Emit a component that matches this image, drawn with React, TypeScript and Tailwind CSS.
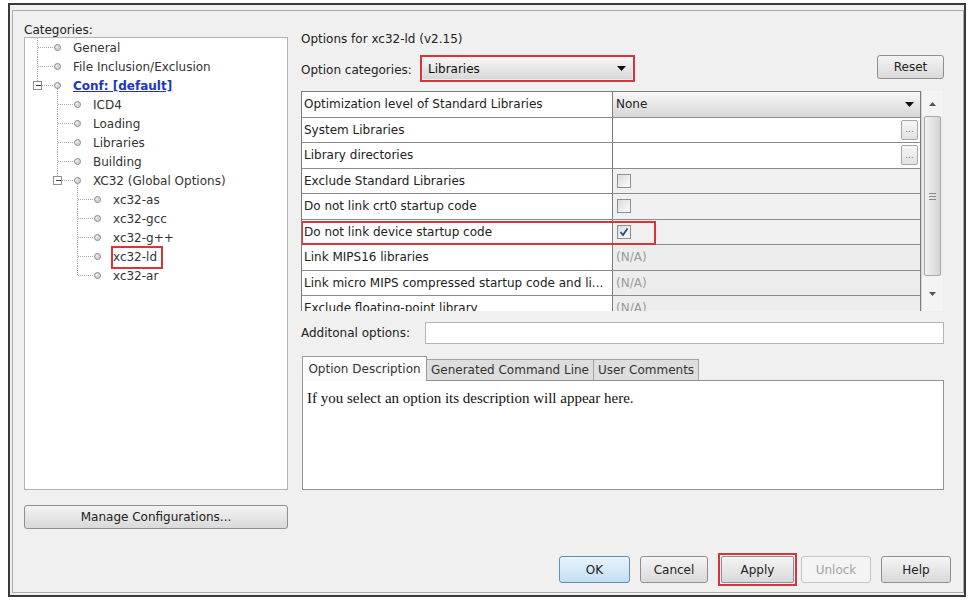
import React from "react";

type TreeItem = { t: string; L: number; last?: boolean; exp?: boolean; link?: boolean; boxed?: boolean };

const tree: TreeItem[] = [
  { t: "General", L: 0 },
  { t: "File Inclusion/Exclusion", L: 0 },
  { t: "Conf: [default]", L: 0, last: true, exp: true, link: true },
  { t: "ICD4", L: 1 },
  { t: "Loading", L: 1 },
  { t: "Libraries", L: 1 },
  { t: "Building", L: 1 },
  { t: "XC32 (Global Options)", L: 1, last: true, exp: true },
  { t: "xc32-as", L: 2 },
  { t: "xc32-gcc", L: 2 },
  { t: "xc32-g++", L: 2 },
  { t: "xc32-ld", L: 2, boxed: true },
  { t: "xc32-ar", L: 2, last: true },
];

function TreeRow({ item }: { item: TreeItem }) {
  const L = item.L;
  const lineX = 12 + 20 * L + 0.5;
  const iconX = 32 + 20 * L + 0.5;
  const w = 48 + 20 * L;
  return (
    <div className="flex h-[19px] items-center">
      <svg width={w} height={19} className="shrink-0" shapeRendering="crispEdges">
        <line x1={lineX} y1={0} x2={lineX} y2={item.last ? 9.5 : 19} stroke="#a6a6a6" strokeDasharray="1 1" />
        <line x1={lineX} y1={9.5} x2={iconX - 5} y2={9.5} stroke="#a6a6a6" strokeDasharray="1 1" />
        {item.exp && (
          <>
            <line x1={iconX} y1={13} x2={iconX} y2={19} stroke="#a6a6a6" strokeDasharray="1 1" />
            <rect x={lineX - 4} y={5.5} width={8} height={8} fill="#fff" stroke="#909090" />
            <line x1={lineX - 2} y1={9.5} x2={lineX + 3} y2={9.5} stroke="#404040" />
          </>
        )}
        <g shapeRendering="auto">
          <circle cx={iconX} cy={9.5} r={3} fill="#d6d6d6" stroke="#8c8c8c" strokeWidth={1} />
          <circle cx={iconX - 0.8} cy={8.7} r={1} fill="#f4f4f4" />
        </g>
      </svg>
      {item.link ? (
        <span className="font-bold text-[#2035c0] underline whitespace-nowrap">{item.t}</span>
      ) : item.boxed ? (
        <span className="relative whitespace-nowrap text-[#333]">
          {item.t}
          <span className="absolute -left-[2px] -right-[6px] -top-[2px] -bottom-[3px] border-2 border-[#d8353b]" />
        </span>
      ) : (
        <span className="whitespace-nowrap text-[#333]">{item.t}</span>
      )}
    </div>
  );
}

type Row = { label: string; kind: "select" | "text" | "check" | "na"; checked?: boolean; highlight?: boolean };

const rows: Row[] = [
  { label: "Optimization level of Standard Libraries", kind: "select" },
  { label: "System Libraries", kind: "text" },
  { label: "Library directories", kind: "text" },
  { label: "Exclude Standard Libraries", kind: "check" },
  { label: "Do not link crt0 startup code", kind: "check" },
  { label: "Do not link device startup code", kind: "check", checked: true, highlight: true },
  { label: "Link MIPS16 libraries", kind: "na" },
  { label: "Link micro MIPS compressed startup code and li...", kind: "na" },
  { label: "Exclude floating-point library", kind: "na" },
];

function Arrow({ w = 9, h = 5, color = "#111" }: { w?: number; h?: number; color?: string }) {
  return (
    <svg width={w} height={h} className="shrink-0">
      <polygon points={`0,0 ${w},0 ${w / 2},${h}`} fill={color} />
    </svg>
  );
}

function UpArrow() {
  return (
    <svg width={7} height={4}>
      <polygon points="0,4 7,4 3.5,0" fill="#555" />
    </svg>
  );
}

function Checkbox({ checked }: { checked?: boolean }) {
  return (
    <div className="w-[14px] h-[14px] border border-[#8e8f8f] bg-linear-to-br from-[#dcdcdc] to-[#fbfbfb] flex items-center justify-center">
      {checked && (
        <svg width={10} height={10}>
          <polyline points="1.5,5 4,8 8.5,1.5" fill="none" stroke="#2b4a8e" strokeWidth={1.8} />
        </svg>
      )}
    </div>
  );
}

function ValueCell({ row }: { row: Row }) {
  if (row.kind === "select")
    return (
      <div className="h-full flex items-center justify-between pl-[3px] pr-[6px] bg-linear-to-b from-[#f8f8f8] to-[#d6d6d6] text-[#222]">
        <span>None</span>
        <Arrow />
      </div>
    );
  if (row.kind === "text")
    return (
      <div className="h-full flex items-center justify-end pr-[2px] bg-white">
        <div className="w-[17px] h-[20px] border border-[#a6a6a6] rounded-[2px] bg-linear-to-b from-[#f6f6f6] to-[#e2e2e2] flex items-center justify-center text-[9px] leading-none text-[#777]">
          ...
        </div>
      </div>
    );
  if (row.kind === "check")
    return (
      <div className="h-full flex items-center pl-[4px] bg-[#f0f0f0]">
        <Checkbox checked={row.checked} />
      </div>
    );
  return <div className="h-full flex items-center pl-[3px] bg-[#ededed] text-[#9a9a9a]">(N/A)</div>;
}

function Btn({ children, w, className = "" }: { children: React.ReactNode; w: string; className?: string }) {
  return (
    <div
      className={`${w} h-[27px] flex items-center justify-center rounded-[3px] border border-[#8e8f8f] bg-linear-to-b from-[#f4f4f4] to-[#dadada] text-[#222] ${className}`}
    >
      {children}
    </div>
  );
}

export default function App() {
  return (
    <div className="w-[968px] h-[601px] bg-white overflow-hidden font-['DejaVu_Sans',sans-serif] text-[12px] text-[#222]">
      <div className="ml-[8px] mt-[3px] w-[958px] h-[594px] border-2 border-[#3a3a3a] pt-[5px] pl-[2px] pb-[2px] bg-[#f0f0f0]">
        <div className="h-full border border-[#ababab] flex flex-col">
          {/* top section */}
          <div className="flex items-start pl-[11px] pt-[13px]">
            {/* left column */}
            <div className="w-[264px] flex flex-col">
              <div className="h-[13px] leading-[13px] text-[#222]">Categories:</div>
              <div className="h-[453px] bg-white border border-[#b4b4b4]">
                {tree.map((it) => (
                  <TreeRow key={it.t} item={it} />
                ))}
              </div>
              <div className="mt-[15px] h-[24px] flex items-center justify-center rounded-[3px] border border-[#8e8f8f] bg-linear-to-b from-[#f4f4f4] to-[#d9d9d9] text-[#222]">
                Manage Configurations...
              </div>
            </div>

            {/* right column */}
            <div className="ml-[13px] w-[643px] flex flex-col">
              <div className="mt-[8px] h-[14px] leading-[14px] text-[#222]">Options for xc32-ld (v2.15)</div>
              <div className="mt-[9px] h-[27px] flex items-start">
                <div className="h-[27px] flex items-center">
                  <span className="w-[119px] pt-[2px]">Option categories:</span>
                  <div className="w-[215px] h-[27px] border-2 border-[#d8343c] p-[1px]">
                    <div className="h-full flex items-center justify-between pl-[5px] pr-[6px] bg-linear-to-b from-[#f6f6f6] to-[#d8d8d8] text-[#111]">
                      <span>Libraries</span>
                      <Arrow />
                    </div>
                  </div>
                </div>
                <div className="ml-auto w-[67px] h-[24px] flex items-center justify-center rounded-[3px] border border-[#8e8f8f] bg-linear-to-b from-[#f4f4f4] to-[#dadada]">
                  Reset
                </div>
              </div>

              {/* table */}
              <div className="mt-[9px] h-[220px] flex overflow-hidden">
                <div className="w-[620px] h-[220px] overflow-hidden border-l border-t border-r border-[#7c7c7c]">
                  {rows.map((r) => (
                    <div key={r.label} className="relative h-[25.5px] flex border-b border-[#8c8c8c]">
                      <div className="w-[311px] shrink-0 border-r border-[#7c7c7c] bg-white pl-[2px] flex items-center whitespace-nowrap overflow-hidden text-[#222]">
                        {r.label}
                      </div>
                      <div className="flex-1">
                        <ValueCell row={r} />
                      </div>
                      {r.highlight && (
                        <div className="absolute left-[-1px] top-[1px] w-[355px] h-[24px] border-2 border-[#d8353b]" />
                      )}
                    </div>
                  ))}
                </div>
                <div className="w-[22px] h-[220px] flex flex-col bg-[#ececec] border-l border-[#d6d6d6]">
                  <div className="h-[25px] flex items-center justify-center bg-[#f4f4f4]">
                    <UpArrow />
                  </div>
                  <div className="mx-[2px] h-[160px] rounded-[2px] border border-[#a9a9a9] bg-linear-to-r from-[#f2f2f2] to-[#d4d4d4] flex flex-col items-center justify-center gap-[2px]">
                    <div className="w-[7px] h-px bg-[#8a8a8a]" />
                    <div className="w-[7px] h-px bg-[#8a8a8a]" />
                    <div className="w-[7px] h-px bg-[#8a8a8a]" />
                  </div>
                  <div className="flex-1 flex items-center justify-center bg-[#f4f4f4]">
                    <Arrow w={7} h={4} color="#555" />
                  </div>
                </div>
              </div>

              {/* additional options */}
              <div className="mt-[11px] h-[22px] flex items-center">
                <span className="w-[124px]">Additonal options:</span>
                <div className="flex-1 h-[22px] bg-white border border-[#b5b5b5]" />
              </div>

              {/* tabs */}
              <div className="mt-[12px] ml-[1px] h-[24px] flex items-end">
                <div className="relative z-10 -mb-px w-[125px] h-[25px] flex items-center justify-center bg-[#fbfbfb] border border-b-0 border-[#9a9a9a] text-[#333]">
                  Option Description
                </div>
                <div className="w-[167px] h-[21px] flex items-center justify-center bg-[#dedede] border border-l-0 border-b-0 border-[#a2a2a2] text-[#333]">
                  Generated Command Line
                </div>
                <div className="w-[105px] h-[21px] flex items-center justify-center bg-[#dedede] border border-l-0 border-b-0 border-[#a2a2a2] text-[#333]">
                  User Comments
                </div>
              </div>
              <div className="ml-[1px] h-[110px] bg-white border border-[#939393] pl-[4px] pt-[8px] font-['Liberation_Serif',serif] text-[15px] leading-[18px] text-[#111]">
                If you select an option its description will appear here.
              </div>
            </div>
          </div>

          {/* bottom buttons */}
          <div className="mt-[24px] h-[33px] flex items-center justify-end pr-[12px]">
            <div className="w-[71px] h-[27px] flex items-center justify-center rounded-[3px] border border-[#5b8fb8] bg-linear-to-b from-[#e8f3fb] to-[#c4dff2] text-[#222]">
              OK
            </div>
            <Btn w="w-[68px]" className="ml-[10px]">
              Cancel
            </Btn>
            <div className="ml-[10px] w-[79px] h-[33px] border-2 border-[#d8343c] p-[1px]">
              <div className="h-full flex items-center justify-center rounded-[2px] border border-[#8e8f8f] bg-linear-to-b from-[#f4f4f4] to-[#dadada] text-[#222]">
                Apply
              </div>
            </div>
            <div className="ml-[4px] w-[70px] h-[27px] flex items-center justify-center rounded-[3px] border border-[#c4c4c4] bg-[#f4f4f4] text-[#a3a3a3]">
              Unlock
            </div>
            <Btn w="w-[70px]" className="ml-[10px]">
              Help
            </Btn>
          </div>
        </div>
      </div>
    </div>
  );
}
